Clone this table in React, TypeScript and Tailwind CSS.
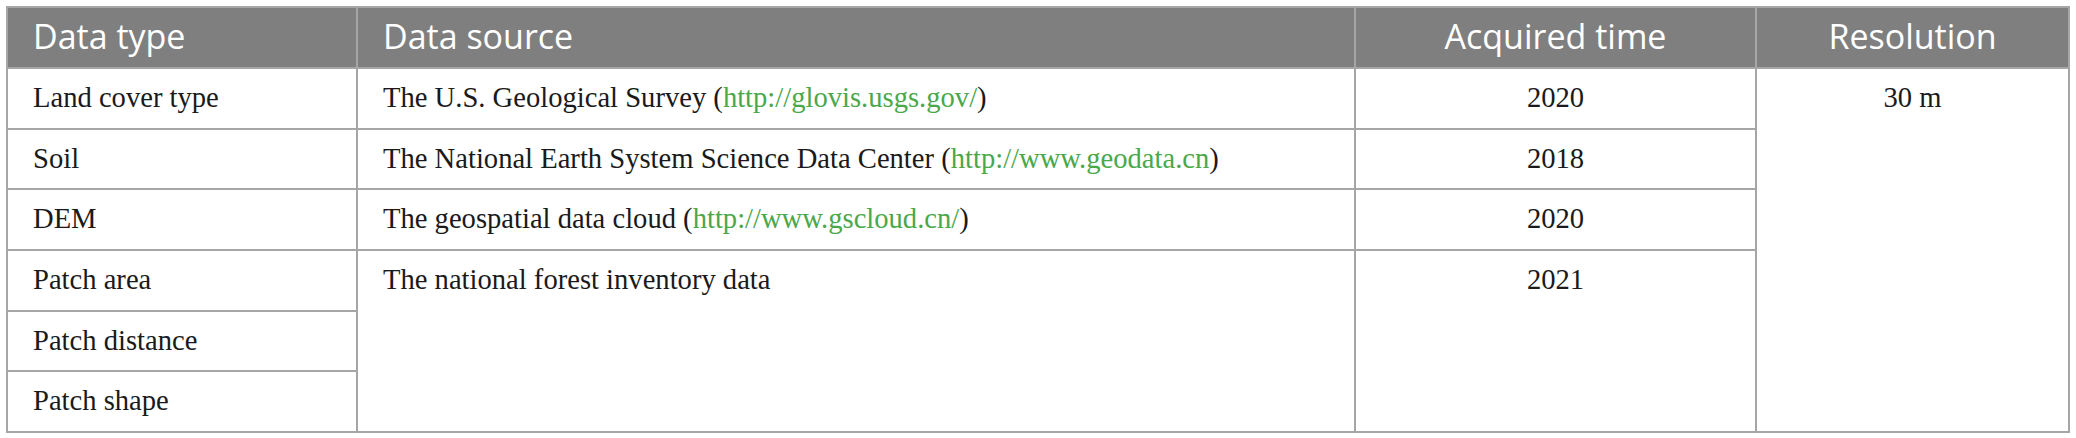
import React from "react";

const serif = "font-['Liberation_Serif',serif]";
const sans = "font-['Open_Sans',sans-serif]";

function Link({ href }: { href: string }) {
  return <span className="text-[#4aa84a]">{href}</span>;
}

const head = `bg-[#7f7f7f] text-white text-[34px] leading-[40px] ${sans} pt-[8px] px-[25px]`;
const cell = `bg-white text-[#1a1a1a] text-[28.6px] leading-[34px] ${serif} pt-[12px] px-[25px]`;

export default function App() {
  return (
    <div className="w-[2076px] h-[438px] bg-white pt-[6px] pl-[6px]">
      <div className="grid grid-cols-[348px_996px_399px_311px] grid-rows-[59px_59px_58px_59px_59px_58px_59px] gap-[2px] p-[2px] bg-[#a6a6a6] w-[2064px]">
        <div className={head}>Data type</div>
        <div className={head}>Data source</div>
        <div className={`${head} text-center`}>Acquired time</div>
        <div className={`${head} text-center`}>Resolution</div>

        <div className={cell}>Land cover type</div>
        <div className={cell}>
          The U.S. Geological Survey (<Link href="http://glovis.usgs.gov/" />)
        </div>
        <div className={`${cell} text-center`}>2020</div>
        <div className={`${cell} text-center row-span-6`}>30 m</div>

        <div className={cell}>Soil</div>
        <div className={cell}>
          The National Earth System Science Data Center (<Link href="http://www.geodata.cn" />)
        </div>
        <div className={`${cell} text-center`}>2018</div>

        <div className={cell}>DEM</div>
        <div className={cell}>
          The geospatial data cloud (<Link href="http://www.gscloud.cn/" />)
        </div>
        <div className={`${cell} text-center`}>2020</div>

        <div className={cell}>Patch area</div>
        <div className={`${cell} row-span-3`}>The national forest inventory data</div>
        <div className={`${cell} text-center row-span-3`}>2021</div>

        <div className={cell}>Patch distance</div>
        <div className={cell}>Patch shape</div>
      </div>
    </div>
  );
}
